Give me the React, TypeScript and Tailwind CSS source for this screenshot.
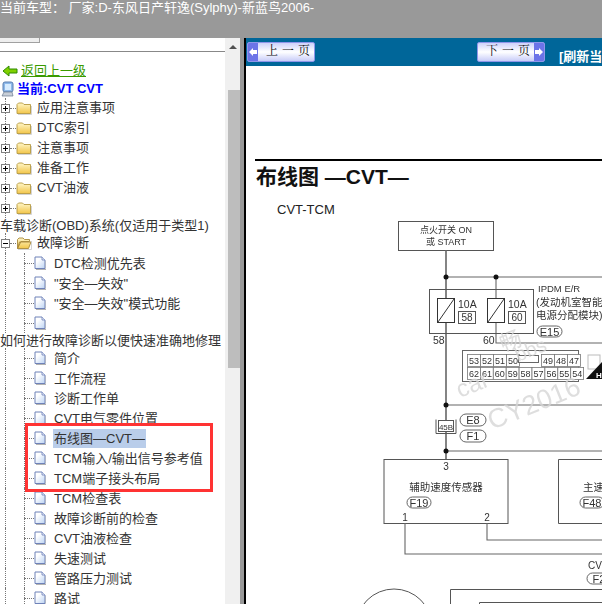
import React from "react";

const FONT = "font-['Liberation_Sans','Noto_Sans_CJK_SC',sans-serif]";

function Folder({ open }: { open?: boolean }) {
  return (
    <svg width="16" height="14" viewBox="0 0 16 14" className="shrink-0">
      <defs>
        <linearGradient id="fg" x1="0" y1="0" x2="0" y2="1">
          <stop offset="0" stopColor="#fff6c8" />
          <stop offset="1" stopColor="#f2c64a" />
        </linearGradient>
      </defs>
      {open ? (
        <path d="M1.5 12.5V3.5L3 2h4l1.500 1.500h5v2H5L1.500 12.500 L3.500 6h11.500l-2.500 6.500z" fill="url(#fg)" stroke="#a8893a" strokeWidth="0.9" />
      ) : (
        <path d="M1 12.500V3.500L2.500 2h4L8 3.500h6.500v9z" fill="url(#fg)" stroke="#b6983f" strokeWidth="0.9" />
      )}
      <path d="M2 13.500h13.500V5" fill="none" stroke="#c9c9c9" strokeWidth="0.8" />
    </svg>
  );
}

function Doc() {
  return (
    <svg width="12" height="14" viewBox="0 0 12 14" className="shrink-0">
      <defs>
        <linearGradient id="dg" x1="0" y1="0" x2="1" y2="1">
          <stop offset="0.3" stopColor="#ffffff" />
          <stop offset="1" stopColor="#bcd3f3" />
        </linearGradient>
      </defs>
      <path d="M1 1h7l3 3v8.500H1z" fill="url(#dg)" stroke="#6f82b8" strokeWidth="1" />
      <path d="M8 1v3h3" fill="#e8eefb" stroke="#6f82b8" strokeWidth="0.8" />
      <path d="M2 13.500h10V5" fill="none" stroke="#a9a9a9" strokeWidth="0.9" />
    </svg>
  );
}

function Expander({ minus }: { minus?: boolean }) {
  return (
    <div className="relative z-10 flex h-[9px] w-[9px] shrink-0 items-center justify-center border border-[#808080] bg-white">
      <div className="h-[1px] w-[5px] bg-black" />
      {!minus && <div className="absolute h-[5px] w-[1px] bg-black" />}
    </div>
  );
}

function FolderRow({ text, open, last }: { text?: string; open?: boolean; last?: boolean }) {
  return (
    <div className="relative flex h-[20px] items-center pl-[1px]">
      <div className={`absolute left-[5px] top-0 border-l border-dotted border-[#777] ${last ? "h-[10px]" : "h-[20px]"}`} />
      <Expander minus={open} />
      <div className="w-[6px] border-t border-dotted border-[#777]" />
      <Folder open={open} />
      {text && <span className="ml-[5px] text-[13px] leading-[20px] text-[#333]">{text}</span>}
    </div>
  );
}

function DocRow({ text, selected }: { text?: string; selected?: boolean }) {
  return (
    <div className="relative flex h-[20px] items-center pl-[24px]">
      <div className="absolute left-[5px] top-0 h-[20px] border-l border-dotted border-[#777]" />
      <div className="absolute left-[24px] top-0 h-[20px] border-l border-dotted border-[#777]" />
      <div className="w-[10px] border-t border-dotted border-[#777]" />
      <Doc />
      {text && (
        <span className={`ml-[7px] px-[1px] text-[13px] leading-[19px] text-[#333] ${selected ? "bg-[#b9cdea]" : ""}`}>{text}</span>
      )}
    </div>
  );
}

function Wrapped({ text }: { text: string }) {
  return <div className="h-[15px] whitespace-nowrap text-[13px] leading-[15px] text-[#333]">{text}</div>;
}

function NavButton({ text, dir }: { text: string; dir: "l" | "r" }) {
  const arrow = (
    <div className="flex w-[10px] items-center justify-center self-stretch bg-[#6c74e8]">
      <svg width="8" height="8" viewBox="0 0 8 8">
        {dir === "l" ? <path d="M0 4l4-4v2h4v4H4v2z" fill="#fff" /> : <path d="M8 4L4 0v2H0v4h4v2z" fill="#fff" />}
      </svg>
    </div>
  );
  return (
    <div className="flex h-[20px] w-[68px] shrink-0 items-stretch overflow-hidden rounded-[2px] border border-[#8f96ea] bg-gradient-to-b from-[#cdd2fb] via-white to-[#c9cdf8]">
      {dir === "l" && arrow}
      <span className={`flex-1 font-['Liberation_Serif','Noto_Serif_CJK_SC','Noto_Sans_CJK_SC',serif] text-[12px] leading-[17px] tracking-[4px] text-[#111] ${dir === "l" ? "pl-[8px]" : "pl-[8px]"}`}>{text}</span>
      {dir === "r" && arrow}
    </div>
  );
}

function Pill({ x, y, w, h, t }: { x: number; y: number; w: number; h: number; t: string }) {
  return (
    <g>
      <rect x={x} y={y} width={w} height={h} rx={h / 2} fill="#fff" stroke="#555" strokeWidth="0.9" />
      <text x={x + w / 2} y={y + h / 2 + 4} textAnchor="middle" fontSize="11" fill="#333">{t}</text>
    </g>
  );
}

function Diagram() {
  const top = ["53", "52", "51", "50", "", "49", "48", "47"];
  const bot = ["62", "61", "60", "59", "58", "57", "56", "55", "54"];
  const L = "#666";
  return (
    <svg width="356" height="386" viewBox="246 218 356 386" className="block blur-[0.3px]" fontFamily="'Liberation Sans','Noto Sans CJK SC',sans-serif">
      <rect x="398.500" y="221.500" width="95" height="29" fill="#fff" stroke="#555" />
      <text x="446" y="233" textAnchor="middle" fontSize="9" fill="#333">点火开关 ON</text>
      <text x="446" y="245" textAnchor="middle" fontSize="9" fill="#333">或 START</text>

      <path d="M446 250V459" stroke={L} strokeWidth="1.600" fill="none" />
      <path d="M446 277H602M496 277V343H602M446 405H602M446 451H602" stroke={L} strokeWidth="1.100" fill="none" />
      <circle cx="446" cy="277" r="2.500" fill="#111" />
      <circle cx="496" cy="277" r="2.500" fill="#111" />
      <circle cx="446" cy="405" r="2.500" fill="#111" />
      <circle cx="446" cy="451" r="2.500" fill="#111" />

      <rect x="429.500" y="289.500" width="104" height="44" fill="none" stroke="#555" />
      {[437, 487].map((x) => (
        <g key={x}>
          <rect x={x + 0.5} y="298.500" width="17" height="24" fill="#fff" stroke="#333" />
          <path d={`M${x + 1} 322L${x + 17} 299`} stroke="#333" fill="none" />
        </g>
      ))}
      <text x="458" y="308" fontSize="10.500" fill="#333">10A</text>
      <rect x="458.500" y="311.500" width="17" height="12" fill="#fff" stroke="#555" />
      <text x="467" y="321" textAnchor="middle" fontSize="10" fill="#333">58</text>
      <text x="508" y="308" fontSize="10.500" fill="#333">10A</text>
      <rect x="508.500" y="311.500" width="17" height="12" fill="#fff" stroke="#555" />
      <text x="517" y="321" textAnchor="middle" fontSize="10" fill="#333">60</text>
      <text x="433" y="344" fontSize="10.500" fill="#333">58</text>
      <text x="483" y="344" fontSize="10.500" fill="#333">60</text>

      <text x="538" y="292" fontSize="9.500" fill="#333">IPDM E/R</text>
      <text x="536" y="306" fontSize="10.500" fill="#333">(发动机室智能</text>
      <text x="536" y="319" fontSize="10.500" fill="#333">电源分配模块)</text>
      <Pill x={537} y={326} w={25} h={11} t="E15" />

      <rect x="462.500" y="350.500" width="116" height="31" fill="#fff" stroke="#666" />
      {top.map((t, i) => {
        const x = i < 4 ? 467 + i * 13 : i === 4 ? 0 : 541 + (i - 5) * 13;
        if (i === 4) return <rect key={i} x="518.500" y="355.500" width="20" height="7" fill="#fff" stroke="#666" />;
        return (
          <g key={i}>
            <rect x={x + 0.5} y="354.500" width="13" height="12" fill="#fff" stroke="#777" strokeWidth="0.800" />
            <text x={x + 7} y="364" textAnchor="middle" fontSize="9" fill="#333">{t}</text>
          </g>
        );
      })}
      {bot.map((t, i) => (
        <g key={i}>
          <rect x={467.500 + i * 12.900} y="367.500" width="12.900" height="12" fill="#fff" stroke="#777" strokeWidth="0.800" />
          <text x={474 + i * 12.900} y="377" textAnchor="middle" fontSize="9" fill="#333">{t}</text>
        </g>
      ))}
      <rect x="588" y="355" width="12" height="14" fill="none" stroke="#bbb" />
      <path d="M586 379L602 362V379z" fill="#111" />
      <text x="596" y="378" fontSize="8" fontWeight="700" fill="#fff">H</text>

      {/* watermark, over the wiring */}
      <g fill="#d6d6d6" fillOpacity="0.8">
        <text x="503" y="352" fontSize="22" transform="rotate(-20 503 352)">畅</text>
        <text x="460" y="398" fontSize="24" transform="rotate(-22 460 398)">car</text>
        <text x="518" y="362" fontSize="20" transform="rotate(-22 518 362)">bbs</text>
        <text x="492" y="430" fontSize="27" transform="rotate(-22 492 430)">CY2016</text>
      </g>

      <path d="M436 419.500v14h20v-14" fill="none" stroke="#555" />
      <rect x="438.500" y="420.500" width="15" height="11" fill="#fff" stroke="#555" />
      <text x="446" y="429.500" textAnchor="middle" fontSize="8" fill="#333">45B</text>
      <Pill x={460} y={414} w={26} h={12} t="E8" />
      <Pill x={460} y={430} w={26} h={12} t="F1" />

      <rect x="384" y="459.500" width="124" height="64" fill="#fff" stroke="#555" />
      <text x="446" y="470" textAnchor="middle" fontSize="10" fill="#333">3</text>
      <text x="446" y="491" textAnchor="middle" fontSize="10.500" fill="#333">辅助速度传感器</text>
      <Pill x={407} y={497} w={24} h={11} t="F19" />
      <text x="405" y="521" textAnchor="middle" fontSize="10" fill="#333">1</text>
      <text x="487" y="521" textAnchor="middle" fontSize="10" fill="#333">2</text>
      <path d="M405 523V554H602M487 523V540H602" stroke={L} strokeWidth="1.100" fill="none" />

      <path d="M602 459.500H558.500V523.500H602" fill="#fff" stroke="#555" />
      <text x="583" y="491" fontSize="10.500" fill="#333">主速</text>
      <Pill x={580} y={497} w={24} h={11} t="F48" />

      <text x="588" y="569" fontSize="10" fill="#333">CV</text>
      <Pill x={587} y={573} w={24} h={11} t="F2" />
      <path d="M602 589.500H450.500V604M602 602.500H479.500V604" fill="none" stroke="#555" />
      <circle cx="394" cy="627" r="38" fill="none" stroke="#555" />
    </svg>
  );
}

const docs1 = ["DTC检测优先表", '"安全—失效"', '"安全—失效"模式功能', ""];
const docs2 = [
  "简介",
  "工作流程",
  "诊断工作单",
  "CVT电气零件位置",
  "布线图—CVT—",
  "TCM输入/输出信号参考值",
  "TCM端子接头布局",
  "TCM检查表",
  "故障诊断前的检查",
  "CVT油液检查",
  "失速测试",
  "管路压力测试",
  "路试",
];

export default function App() {
  return (
    <div className={`flex h-[604px] w-[602px] flex-col overflow-hidden bg-white ${FONT}`}>
      <header className="h-[38px] shrink-0 overflow-hidden whitespace-nowrap bg-[#999999] text-[13px] leading-[15px] text-white">
        当前车型： 厂家:D-东风日产轩逸(Sylphy)-新蓝鸟2006-
      </header>
      <div className="flex min-h-0 flex-1">
        <aside className="relative w-[225px] shrink-0 overflow-hidden">
          <div className="h-[5px] w-[40px] border-b border-r border-[#a0a0a0] bg-[#eeeeee]" />
          <div className="mt-[8px] h-[1px] bg-[#888]" />
          <div className="mt-[10px] flex h-[17px] items-center pl-[2px]">
            <svg width="16" height="12" viewBox="0 0 16 12" className="shrink-0">
              <path d="M1 6l6-5v3h8v4H7v3z" fill="#7fd000" stroke="#2f8a00" strokeWidth="1" />
            </svg>
            <span className="ml-[3px] text-[13px] leading-[16px] text-[#3a9a00] underline">返回上一级</span>
          </div>
          <div className="flex h-[19px] items-center">
            <svg width="15" height="16" viewBox="0 0 15 16" className="ml-[1px] shrink-0">
              <rect x="2" y="1" width="10" height="10" rx="2" fill="#8db9ea" stroke="#5b7fb0" />
              <rect x="4" y="3" width="6" height="6" fill="#d7ecff" />
              <path d="M1 15l2-4h8l1 4z" fill="#c8cfd8" stroke="#6a7a90" strokeWidth="0.7" />
            </svg>
            <span className="ml-[1px] text-[13px] font-bold leading-[18px] text-[#0000ff]">当前:CVT CVT</span>
          </div>
          <FolderRow text="应用注意事项" />
          <FolderRow text="DTC索引" />
          <FolderRow text="注意事项" />
          <FolderRow text="准备工作" />
          <FolderRow text="CVT油液" />
          <FolderRow />
          <Wrapped text="车载诊断(OBD)系统(仅适用于类型1)" />
          <FolderRow text="故障诊断" open />
          {docs1.map((t, i) => (
            <DocRow key={i} text={t} />
          ))}
          <Wrapped text="如何进行故障诊断以便快速准确地修理" />
          {docs2.map((t) => (
            <DocRow key={t} text={t} selected={t === "布线图—CVT—"} />
          ))}
          <div className="absolute left-[25px] top-[385px] h-[69px] w-[188px] border-[3px] border-[#ff3333]" />
        </aside>

        <div className="flex w-[15px] shrink-0 flex-col items-center bg-[#f0f0f0]">
          <div className="mt-[7px] h-0 w-0 border-x-[4px] border-b-[4px] border-x-transparent border-b-[#505050]" />
          <div className="ml-[3px] mt-[41px] h-[278px] w-[13px] bg-[#bdbdbd]" />
        </div>
        <div className="w-[4px] shrink-0 bg-[#999999]" />
        <div className="w-[2px] shrink-0 bg-black" />

        <main className="min-w-0 flex-1 overflow-hidden">
          <div className="flex h-[28px] items-start overflow-hidden whitespace-nowrap bg-[#006699] pl-[1px] pt-[4px]">
            <NavButton text="上一页" dir="l" />
            <div className="ml-[162px]">
              <NavButton text="下一页" dir="r" />
            </div>
            <span className="ml-[14px] mt-[7px] text-[13px] font-bold leading-[15px] text-white">[刷新当前页]</span>
          </div>
          <div className="ml-[9px] mt-[93px] border-t-[2px] border-black" />
          <h1 className="ml-[10px] mt-[4px] text-[21px] font-bold leading-[24px] text-[#111]">布线图 —CVT—</h1>
          <div className="ml-[31px] mt-[13px] text-[13px] leading-[16px] text-[#222]">CVT-TCM</div>
          <Diagram />
        </main>
      </div>
    </div>
  );
}
